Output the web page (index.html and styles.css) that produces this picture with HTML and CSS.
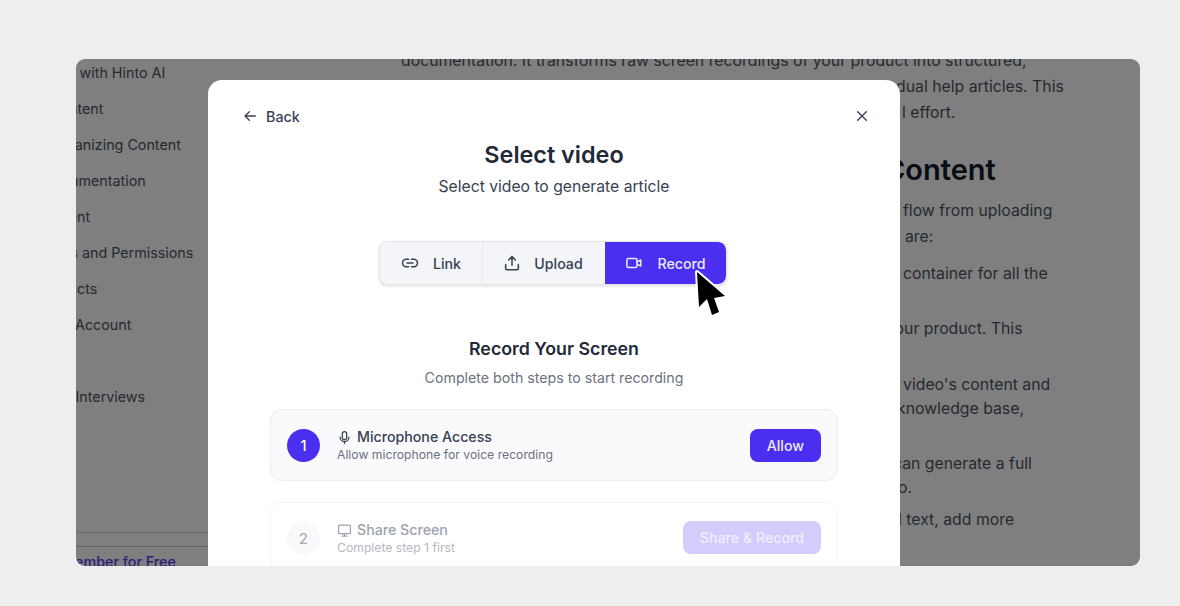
FILE: index.html
```html
<!DOCTYPE html>
<html lang="en">
<head>
    <meta charset="UTF-8">
    <title>Select video</title>
    <link rel="stylesheet" href="styles.css">
</head>
<body>

    <div class="frame">

        <!-- page behind the dialog -->
        <div class="behind">
            <div class="sidebar">
                <div class="nav">
                    <div class="nav-item shift-2">Talk with Hinto AI</div>
                    <div class="nav-item">Content</div>
                    <div class="nav-item">Organizing Content</div>
                    <div class="nav-item shift-7">Documentation</div>
                    <div class="nav-item">Agent</div>
                    <div class="nav-item shift-9">Roles and Permissions</div>
                    <div class="nav-item shift-13">Products</div>
                    <div class="nav-item">My Account</div>
                    <div class="nav-item nav-gap shift-4">Job Interviews</div>
                </div>
                <div class="sidebar-foot">
                    <div class="foot-line"></div>
                    <a class="foot-link">Member for Free</a>
                </div>
            </div>
            <div class="doc">
                <p class="doc-line doc-first">documentation. It transforms raw screen recordings of your product into structured,</p>
                <div class="doc-rest">
                    <p class="doc-line out-3">dual help articles. This</p>
                    <p class="doc-line in-3">l effort.</p>
                    <h2 class="doc-title">Content</h2>
                    <p class="doc-line in-4">flow from uploading</p>
                    <p class="doc-line in-6">are:</p>
                    <p class="doc-line in-4 gap-s">container for all the</p>
                    <p class="doc-line out-13 gap-l">your product. This</p>
                    <p class="doc-line in-4 gap-xl">video's content and</p>
                    <p class="doc-line out-2 tight">knowledge base,</p>
                    <p class="doc-line out-6 gap-l">can generate a full</p>
                    <p class="doc-line out-1 tight">o.</p>
                    <p class="doc-line out-1 gap-xs">l text, add more</p>
                </div>
            </div>
        </div>

        <div class="overlay"></div>

        <!-- dialog -->
        <div class="modal">
            <div class="modal-top">
                <div class="back">
                    <svg class="icon" width="16" height="16" viewBox="0 0 24 24"><path d="M20 12H5M11 5.500 4.500 12l6.500 6.500"/></svg>
                    <span>Back</span>
                </div>
                <svg class="icon" width="16" height="16" viewBox="0 0 24 24"><path d="M5.500 5.500l13 13M18.500 5.500l-13 13"/></svg>
            </div>

            <h1 class="modal-title">Select video</h1>
            <p class="modal-sub">Select video to generate article</p>

            <div class="tabs">
                <div class="tab tab-link">
                    <svg class="icon" width="18" height="18" viewBox="0 0 24 24"><path d="M10 7H7a5 5 0 0 0 0 10h3M14 7h3a5 5 0 0 1 0 10h-3M8 12h8"/></svg>
                    <span>Link</span>
                </div>
                <div class="tab tab-upload">
                    <svg class="icon" width="18" height="18" viewBox="0 0 24 24"><path d="M12 15V4M7.500 8 12 3.500 16.500 8M3.500 14v5a2 2 0 0 0 2 2h13a2 2 0 0 0 2-2v-5"/></svg>
                    <span>Upload</span>
                </div>
                <div class="tab tab-record">
                    <svg class="icon" width="18" height="18" viewBox="0 0 24 24"><rect x="2.500" y="6" width="13.500" height="12" rx="2"/><path d="M16 10.500l5-2.500v8l-5-2.500"/></svg>
                    <span>Record</span>
                </div>
            </div>

            <h3 class="section-title">Record Your Screen</h3>
            <p class="section-sub">Complete both steps to start recording</p>

            <div class="step">
                <div class="step-num">1</div>
                <div class="step-text">
                    <div class="step-title">
                        <svg class="icon" width="15" height="15" viewBox="0 0 24 24"><rect x="8.500" y="2.500" width="7" height="13" rx="3.500"/><path d="M5 11.500a7 7 0 0 0 14 0M12 18.500v3"/></svg>
                        <span>Microphone Access</span>
                    </div>
                    <div class="step-sub">Allow microphone for voice recording</div>
                </div>
                <button class="btn">Allow</button>
            </div>

            <div class="step step-off">
                <div class="step-num">2</div>
                <div class="step-text">
                    <div class="step-title">
                        <svg class="icon" width="15" height="15" viewBox="0 0 24 24"><rect x="2.500" y="3.500" width="19" height="13.500" rx="2"/><path d="M8 21h8M12 17v4"/></svg>
                        <span>Share Screen</span>
                    </div>
                    <div class="step-sub">Complete step 1 first</div>
                </div>
                <button class="btn">Share &amp; Record</button>
            </div>
        </div>

        <!-- mouse pointer -->
        <svg class="pointer" width="36" height="54" viewBox="0 0 36 54">
            <path d="M2 3 L4 38 L12 30 L17 46 L24 43 L19 29 L30 27 Z"/>
        </svg>
    </div>

</body>
</html>
```

FILE: styles.css
```css
* {
    box-sizing: border-box;
}
html, body {
    height: 100%;
}
body {
    font-family: Inter, "Liberation Sans", sans-serif;
    background-color: #eeeeee;
    margin: 0;
    padding: 59px 40px 40px 76px;
    overflow: hidden;
}
.frame {
    position: relative;
    width: 1064px;
    height: 507px;
    background: #fff;
    border-radius: 9px;
    overflow: hidden;
}
.behind {
    display: flex;
    height: 100%;
}

/* sidebar */
.sidebar {
    width: 350px;
    margin-left: -26px;
    flex-shrink: 0;
    display: flex;
    flex-direction: column;
}
.nav {
    padding-top: 1px;
    flex: 1;
}
.nav-item {
    height: 36px;
    line-height: 26px;
    font-size: 14.300px;
    color: #4b5563;
    white-space: nowrap;
}
.nav-gap {
    margin-top: 36px;
}
.shift-2 {
    margin-left: -2px;
}
.shift-4 {
    margin-left: -4px;
}
.shift-7 {
    margin-left: -7px;
}
.shift-9 {
    margin-left: -9px;
}
.shift-13 {
    margin-left: -13px;
}
.sidebar-foot {
    height: 34px;
    border-top: 1px solid #d6d8dc;
}
.foot-line {
    height: 14px;
    border-bottom: 1px solid #c4c6cc;
}
.foot-link {
    display: block;
    margin: 6px 0 0 12px;
    font-size: 14.300px;
    font-weight: 500;
    color: #5a40f5;
}

/* document text */
.doc {
    margin-left: 1px;
    white-space: nowrap;
}
.doc-line {
    margin: 0;
    font-size: 15.800px;
    line-height: 26px;
    color: #4b5563;
}
.doc-first {
    margin-top: -11px;
}
.doc-rest {
    margin-left: 498px;
}
.doc-title {
    margin: 26px 0 10px -15px;
    font-size: 29px;
    line-height: 36px;
    font-weight: 600;
    color: #111827;
}
.in-3 {
    margin-left: 3px;
}
.in-4 {
    margin-left: 4px;
}
.in-6 {
    margin-left: 6px;
}
.out-1 {
    margin-left: -1px;
}
.out-2 {
    margin-left: -2px;
}
.out-3 {
    margin-left: -3px;
}
.out-6 {
    margin-left: -6px;
}
.out-13 {
    margin-left: -13px;
}
.gap-xs {
    margin-top: 6px;
}
.gap-s {
    margin-top: 11px;
}
.gap-l {
    margin-top: 29px;
}
.gap-xl {
    margin-top: 30px;
}
.tight {
    margin-top: -2px;
}

.overlay {
    position: absolute;
    inset: 0;
    background: rgba(0, 0, 0, 0.5);
}

/* dialog */
.modal {
    position: absolute;
    left: 132px;
    top: 21px;
    width: 692px;
    height: 540px;
    background: #fff;
    border-radius: 14px;
    padding: 27px 62px 0;
    text-align: center;
}
.icon {
    fill: none;
    stroke: currentColor;
    stroke-width: 2;
    stroke-linecap: round;
    stroke-linejoin: round;
    flex-shrink: 0;
}
.modal-top {
    display: flex;
    align-items: center;
    justify-content: space-between;
    margin: 0 -32px 0 -28px;
    height: 18px;
    color: #374151;
}
.back {
    display: flex;
    align-items: center;
    gap: 8px;
    font-size: 14.300px;
    font-weight: 500;
}
.modal-title {
    margin: 14px 0 0;
    font-size: 23.400px;
    line-height: 32px;
    font-weight: 600;
    color: #1f2937;
}
.modal-sub {
    margin: 4px 0 0;
    font-size: 15.700px;
    line-height: 24px;
    color: #374151;
}
.tabs {
    display: inline-flex;
    margin: 42px 2px 0 0;
    height: 44px;
    border: 1px solid #e5e7eb;
    border-radius: 8px;
    background: #f3f5f9;
    box-shadow: 0 1px 3px rgba(0, 0, 0, 0.15);
    overflow: hidden;
    vertical-align: top;
}
.tab {
    display: flex;
    align-items: center;
    justify-content: center;
    gap: 14px;
    font-size: 14.200px;
    font-weight: 500;
    color: #374151;
}
.tab-link {
    width: 103px;
    border-right: 1px solid #e8eaef;
}
.tab-upload {
    width: 122px;
    gap: 13px;
    padding-right: 2px;
}
.tab-record {
    width: 121px;
    background: #4a2ff0;
    color: #eceaff;
    border-radius: 0 8px 8px 0;
}
.section-title {
    margin: 52px 0 0;
    font-size: 17.800px;
    line-height: 24px;
    font-weight: 600;
    color: #1f2937;
}
.section-sub {
    margin: 6px 0 0;
    font-size: 14.200px;
    line-height: 22px;
    color: #6b7280;
}
.step {
    display: flex;
    align-items: center;
    gap: 17px;
    height: 72px;
    margin-top: 20px;
    padding: 0 16px;
    background: #fafafc;
    border: 1px solid #ebedf2;
    border-radius: 12px;
    text-align: left;
}
.step + .step {
    margin-top: 21px;
}
.step-num {
    width: 33px;
    height: 33px;
    border-radius: 50%;
    background: #4a2ff0;
    color: #fff;
    display: flex;
    align-items: center;
    justify-content: center;
    font-size: 14.500px;
    font-weight: 500;
    flex-shrink: 0;
}
.step-text {
    flex: 1;
}
.step-title {
    display: flex;
    align-items: center;
    gap: 5px;
    font-size: 14.200px;
    line-height: 20px;
    font-weight: 500;
    color: #374151;
}
.step-sub {
    font-size: 12.200px;
    line-height: 16px;
    color: #6b7280;
}
.btn {
    height: 33px;
    padding: 0 17px;
    border: 0;
    border-radius: 8px;
    background: #4a2ff0;
    color: #eceaff;
    font-family: inherit;
    font-size: 14.200px;
    font-weight: 500;
}
.step-off {
    background: #fff;
    border-color: #f4f5f8;
}
.step-off .step-num {
    background: #f8f9fb;
    color: #a8acb4;
}
.step-off .step-title {
    color: #9ca3af;
}
.step-off .step-sub {
    color: #b4b8c0;
}
.step-off .btn {
    margin-top: -2px;
    background: #d4cdfc;
    color: #f1eeff;
}

.pointer {
    position: absolute;
    left: 619px;
    top: 210px;
    fill: #000;
    stroke: #fff;
    stroke-width: 4;
    stroke-linejoin: round;
    paint-order: stroke;
}
```
